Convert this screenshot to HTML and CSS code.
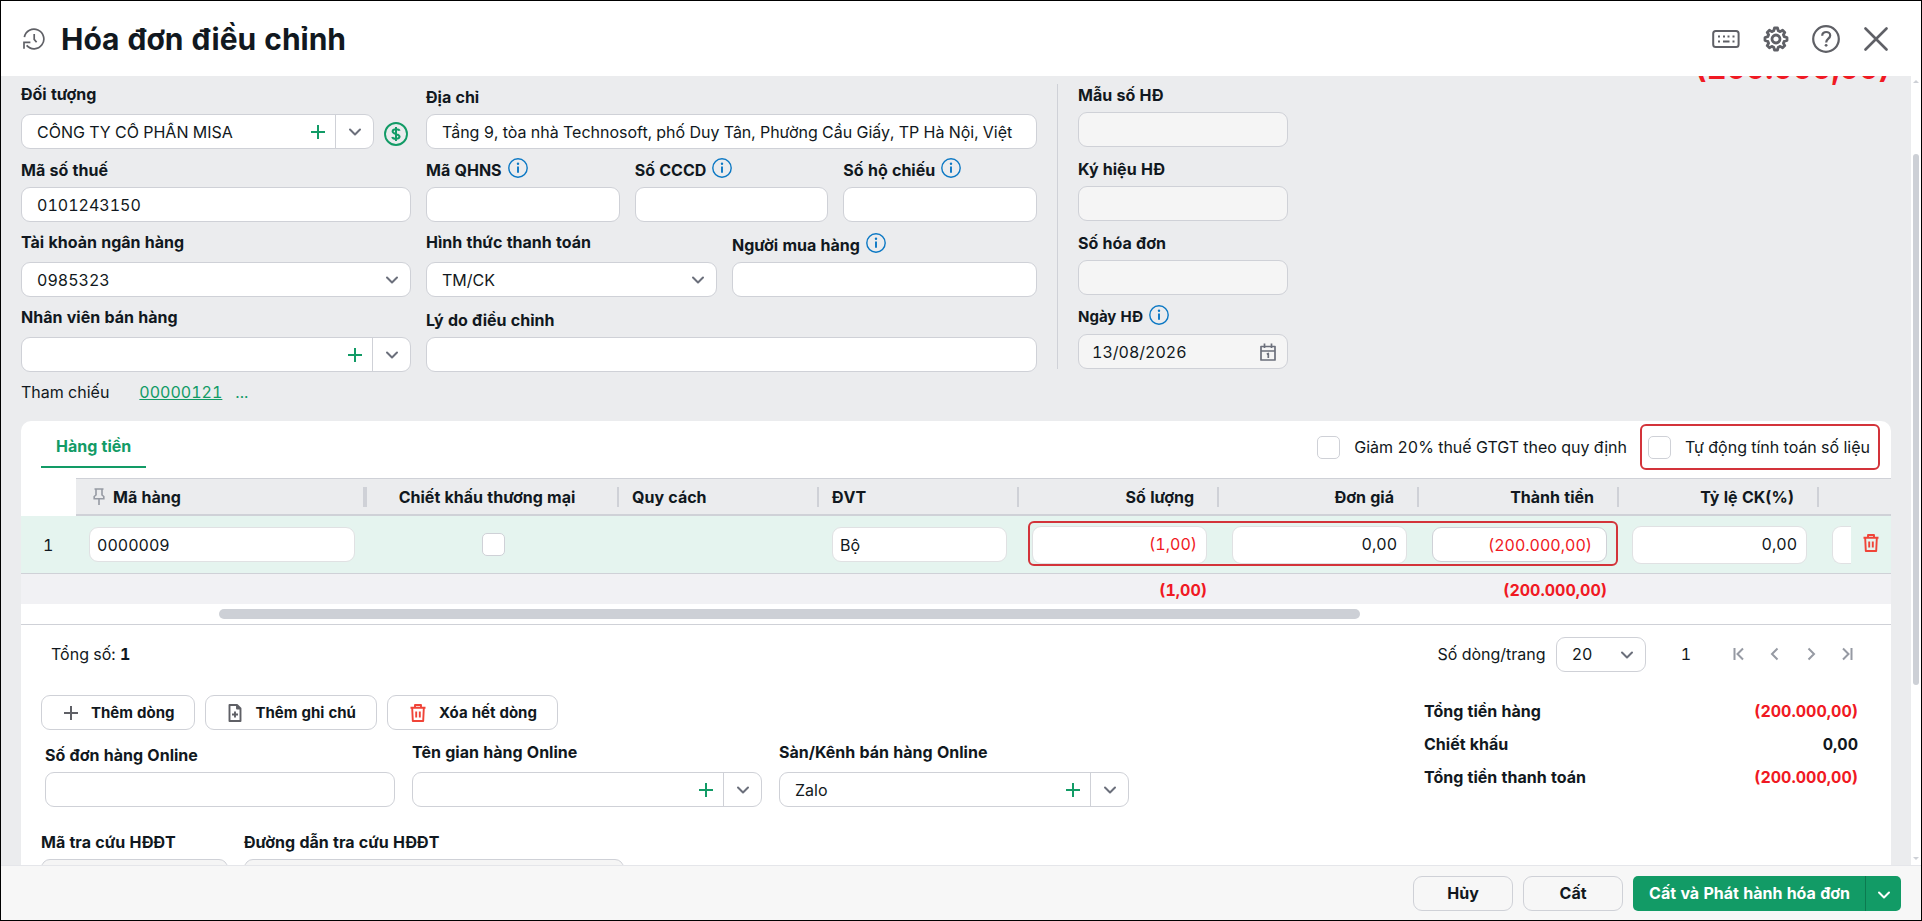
FILE: index.html
```html
<!DOCTYPE html>
<html lang="vi">
    <head>
        <meta charset="utf-8">
        <title>Hóa đơn điều chỉnh</title>
        <link rel="stylesheet" href="styles.css">
    </head>
    <body>
        <!-- icon dùng chung -->
        <svg class="hide">
            <symbol id="i-down" viewBox="0 0 14 14"><path d="M2 4.5l5 5 5-5" fill="none" stroke="currentColor" stroke-width="2" stroke-linecap="round" stroke-linejoin="round"/></symbol>
            <symbol id="i-plus" viewBox="0 0 14 14"><path d="M7 0v14M0 7h14" fill="none" stroke="currentColor" stroke-width="2"/></symbol>
            <symbol id="i-info" viewBox="0 0 20 20"><circle cx="10" cy="10" r="9.2" fill="none" stroke="currentColor" stroke-width="1.4"/><path d="M10 8.5v6.3" stroke="currentColor" stroke-width="1.9"/><circle cx="10" cy="5.8" r="1.2" fill="currentColor"/></symbol>
            <symbol id="i-trash" viewBox="0 0 16 18"><path d="M0.5 3.8h15M5 3.5V1h6v2.5M2.2 4.2l.6 12.8h10.4l.6-12.8M6.2 7.5v6M9.8 7.5v6" fill="none" stroke="currentColor" stroke-width="1.9" stroke-linejoin="round"/></symbol>
        </svg>

        <div class="page">
            <!-- tiêu đề -->
            <header class="header">
                <svg class="icon-history" viewBox="0 0 22 22"><path d="M1.4 9.2A9.8 9.8 0 1 1 3.6 17.4M1 20.8V14.4H7.4M11.2 6v5.4l2.4 2.8" fill="none" stroke="currentColor" stroke-width="1.7"/></svg>
                <h1 class="title">Hóa đơn điều chỉnh</h1>
                <div class="header-tools">
                    <button class="tool" aria-label="Phím tắt">
                        <svg width="28" height="28" viewBox="0 0 28 28"><rect x="1.2" y="6" width="25.4" height="16" rx="2.5" fill="none" stroke="currentColor" stroke-width="2"/><path d="M6 11.5h2M11 11.5h2M15.5 11.5h2M20.5 11.5h2M6 16.5h2M11 16.5h6.5M20.5 16.5h2" stroke="currentColor" stroke-width="2"/></svg>
                    </button>
                    <button class="tool" aria-label="Thiết lập">
                        <svg width="26" height="26" viewBox="-13 -13 26 26"><path d="M-2.3-8.2L-1.5-11H1.5L2.3-8.2L4.2-7.4L6.6-8.8L8.8-6.6L7.4-4.2L8.2-2.3L11-1.5V1.5L8.2 2.3L7.4 4.2L8.8 6.6L6.6 8.8L4.2 7.4L2.3 8.2L1.5 11H-1.5L-2.3 8.2L-4.2 7.4L-6.6 8.8L-8.8 6.6L-7.4 4.2L-8.2 2.3L-11 1.5V-1.5L-8.2-2.3L-7.4-4.2L-8.8-6.6L-6.6-8.8L-4.2-7.4Z" fill="none" stroke="currentColor" stroke-width="2.8" stroke-linejoin="round"/><circle r="4" fill="none" stroke="currentColor" stroke-width="2.8"/></svg>
                    </button>
                    <button class="tool" aria-label="Trợ giúp">
                        <svg width="28" height="28" viewBox="0 0 28 28"><circle cx="14" cy="14" r="12.8" fill="none" stroke="currentColor" stroke-width="2.2"/><path d="M10.2 10.8c0-5.2 8-4.8 8-.3 0 3.2-4 3.2-4 7" fill="none" stroke="currentColor" stroke-width="2.2"/><circle cx="14.1" cy="20.3" r="1.4" fill="currentColor"/></svg>
                    </button>
                    <button class="tool" aria-label="Đóng">
                        <svg width="24" height="24" viewBox="0 0 24 24"><path d="M1.5 1.5l21 21M22.5 1.5l-21 21" stroke="currentColor" stroke-width="2.6" stroke-linecap="round"/></svg>
                    </button>
                </div>
            </header>

            <div class="body">
                <main class="content">
                    <div class="big-total">(200.000,00)</div>

                    <!-- thông tin chung -->
                    <section class="form">
                        <div class="form-col">
                            <div class="field">
                                <label class="label label-combo" for="object">Đối tượng</label>
                                <div class="with-icon">
                                    <div class="combo">
                                        <input id="object" type="text" value="CÔNG TY CỔ PHẦN MISA">
                                        <button class="combo-add" aria-label="Thêm"><svg><use href="#i-plus"/></svg></button>
                                        <button class="combo-open" aria-label="Chọn"><svg><use href="#i-down"/></svg></button>
                                    </div>
                                    <button class="debt" aria-label="Công nợ">
                                        <svg width="24" height="24" viewBox="0 0 24 24"><circle cx="12" cy="12" r="11" fill="none" stroke="currentColor" stroke-width="1.9"/><path d="M15.6 8.8C15 7 9 6.4 8.6 9.3c-.3 3.1 7.2 2.2 7 5.4-.3 3-6.8 2.6-7.4.3M12 5v14" fill="none" stroke="currentColor" stroke-width="2"/></svg>
                                    </button>
                                </div>
                            </div>
                            <div class="field">
                                <label class="label" for="tax">Mã số thuế</label>
                                <input id="tax" class="box" type="text" value="0101243150">
                            </div>
                            <div class="field">
                                <label class="label label-combo" for="bank">Tài khoản ngân hàng</label>
                                <div class="select"><select id="bank" class="box"><option>0985323</option></select><svg><use href="#i-down"/></svg></div>
                            </div>
                            <div class="field">
                                <label class="label label-combo" for="staff">Nhân viên bán hàng</label>
                                <div class="combo">
                                    <input id="staff" type="text">
                                    <button class="combo-add" aria-label="Thêm"><svg><use href="#i-plus"/></svg></button>
                                    <button class="combo-open" aria-label="Chọn"><svg><use href="#i-down"/></svg></button>
                                </div>
                            </div>
                        </div>

                        <div class="form-col">
                            <div class="field">
                                <label class="label" for="address">Địa chỉ</label>
                                <input id="address" class="box" type="text" value="Tầng 9, tòa nhà Technosoft, phố Duy Tân, Phường Cầu Giấy, TP Hà Nội, Việt">
                            </div>
                            <div class="field-row">
                                <div class="field">
                                    <label class="label" for="qhns">Mã QHNS <svg class="info"><use href="#i-info"/></svg></label>
                                    <input id="qhns" class="box" type="text">
                                </div>
                                <div class="field">
                                    <label class="label" for="cccd">Số CCCD <svg class="info"><use href="#i-info"/></svg></label>
                                    <input id="cccd" class="box" type="text">
                                </div>
                                <div class="field">
                                    <label class="label" for="passport">Số hộ chiếu <svg class="info"><use href="#i-info"/></svg></label>
                                    <input id="passport" class="box" type="text">
                                </div>
                            </div>
                            <div class="field-row field-row-pay">
                                <div class="field">
                                    <label class="label label-combo" for="pay">Hình thức thanh toán</label>
                                    <div class="select"><select id="pay" class="box"><option>TM/CK</option></select><svg><use href="#i-down"/></svg></div>
                                </div>
                                <div class="field">
                                    <label class="label" for="buyer">Người mua hàng <svg class="info"><use href="#i-info"/></svg></label>
                                    <input id="buyer" class="box" type="text">
                                </div>
                            </div>
                            <div class="field">
                                <label class="label" for="reason">Lý do điều chỉnh</label>
                                <input id="reason" class="box" type="text">
                            </div>
                        </div>

                        <div class="form-col form-col-invoice">
                            <div class="field">
                                <label class="label" for="form-no">Mẫu số HĐ</label>
                                <input id="form-no" class="box box-off" type="text" readonly>
                            </div>
                            <div class="field">
                                <label class="label" for="serial">Ký hiệu HĐ</label>
                                <input id="serial" class="box box-off" type="text" readonly>
                            </div>
                            <div class="field">
                                <label class="label" for="inv-no">Số hóa đơn</label>
                                <input id="inv-no" class="box box-off" type="text" readonly>
                            </div>
                            <div class="field">
                                <label class="label label-small" for="inv-date">Ngày HĐ <svg class="info"><use href="#i-info"/></svg></label>
                                <div class="date">
                                    <input id="inv-date" type="text" value="13/08/2026" readonly>
                                    <svg width="16" height="18" viewBox="0 0 16 18"><path d="M1 3.5h14v13.5H1zM1 8h14M4.5 .5v4.500M11.5 .5v4.500M6.8 11.2l1.5-.7v4.500" fill="none" stroke="currentColor" stroke-width="1.7" stroke-linejoin="round"/></svg>
                                </div>
                            </div>
                        </div>
                    </section>

                    <div class="refs">
                        <span>Tham chiếu</span>
                        <a href="#" class="ref-link">00000121</a>
                        <a href="#" class="ref-more">...</a>
                    </div>

                    <section class="card">
                        <div class="tabs">
                            <button class="tab">Hàng tiền</button>
                            <div class="options">
                                <label class="option"><input class="check" type="checkbox">Giảm 20% thuế GTGT theo quy định</label>
                                <label class="option option-marked"><input class="check" type="checkbox">Tự động tính toán số liệu</label>
                            </div>
                        </div>

                        <!-- bảng hàng hóa -->
                        <table class="grid">
                            <colgroup>
                                <col class="c-no"><col class="c-code"><col class="c-discount">
                                <col class="c-base"><col class="c-base"><col class="c-base"><col class="c-base"><col class="c-base"><col class="c-base">
                                <col class="c-next"><col class="c-act">
                            </colgroup>
                            <thead>
                                <tr>
                                    <th class="blank"></th>
                                    <th class="pinned"><svg class="pin" viewBox="0 0 12 17"><path d="M1.5 1h9M3 1v6L1.2 8.5v2.3h9.6V8.5L9 7V1M6 11v6" fill="none" stroke="currentColor" stroke-width="1.6"/></svg>Mã hàng</th>
                                    <th class="mid">Chiết khấu thương mại</th>
                                    <th>Quy cách</th>
                                    <th>ĐVT</th>
                                    <th class="num">Số lượng</th>
                                    <th class="num">Đơn giá</th>
                                    <th class="num">Thành tiền</th>
                                    <th class="num">Tỷ lệ CK(%)</th>
                                    <th class="last"></th>
                                    <th class="last"></th>
                                </tr>
                            </thead>
                            <tbody>
                                <tr>
                                    <td class="no">1</td>
                                    <td><input class="cell" type="text" value="0000009" aria-label="Mã hàng"></td>
                                    <td class="mid"><input class="check" type="checkbox" aria-label="Chiết khấu thương mại"></td>
                                    <td></td>
                                    <td><input class="cell" type="text" value="Bộ" aria-label="ĐVT"></td>
                                    <td class="marked"><input class="cell cell-num red" type="text" value="(1,00)" aria-label="Số lượng"></td>
                                    <td><input class="cell cell-num" type="text" value="0,00" aria-label="Đơn giá"></td>
                                    <td><input class="cell cell-amount red" type="text" value="(200.000,00)" aria-label="Thành tiền"></td>
                                    <td><input class="cell cell-num" type="text" value="0,00" aria-label="Tỷ lệ CK"></td>
                                    <td class="cut"><div class="cell-cut"></div></td>
                                    <td class="act"><button class="del" aria-label="Xóa dòng"><svg><use href="#i-trash"/></svg></button></td>
                                </tr>
                            </tbody>
                            <tfoot>
                                <tr>
                                    <td colspan="5"></td>
                                    <td>(1,00)</td>
                                    <td></td>
                                    <td>(200.000,00)</td>
                                    <td colspan="3"></td>
                                </tr>
                            </tfoot>
                        </table>
                        <div class="hscroll"><div class="hthumb"></div></div>

                        <div class="pager">
                            <span>Tổng số: <b>1</b></span>
                            <label class="pager-label" for="size">Số dòng/trang</label>
                            <div class="select select-size"><select id="size" class="box"><option>20</option></select><svg><use href="#i-down"/></svg></div>
                            <span class="page-no">1</span>
                            <div class="pager-nav">
                                <button aria-label="Trang đầu"><svg viewBox="0 0 12 14"><path d="M1.5 1v12M10 1.5L4.5 7l5.5 5.5"/></svg></button>
                                <button aria-label="Trang trước"><svg viewBox="0 0 12 14"><path d="M8.5 1.5L3 7l5.5 5.5"/></svg></button>
                                <button aria-label="Trang sau"><svg viewBox="0 0 12 14"><path d="M3.5 1.5L9 7l-5.5 5.5"/></svg></button>
                                <button aria-label="Trang cuối"><svg viewBox="0 0 12 14"><path d="M10.5 1v12M2 1.5L7.5 7L2 12.5"/></svg></button>
                            </div>
                        </div>

                        <div class="bottom">
                            <div class="bottom-left">
                                <div class="actions">
                                    <button class="btn"><svg width="14" height="14"><use href="#i-plus"/></svg>Thêm dòng</button>
                                    <button class="btn"><svg width="14" height="18" viewBox="0 0 14 18"><path d="M9 1H1.5v16h11V4.5zM9 1v3.5h3.5M7 7.5v6M4 10.5h6" fill="none" stroke="currentColor" stroke-width="1.9" stroke-linejoin="round"/></svg>Thêm ghi chú</button>
                                    <button class="btn"><svg class="red-icon" width="16" height="18"><use href="#i-trash"/></svg>Xóa hết dòng</button>
                                </div>
                                <div class="online">
                                    <div class="field">
                                        <label class="label" for="on-no">Số đơn hàng Online</label>
                                        <input id="on-no" class="box" type="text">
                                    </div>
                                    <div class="field">
                                        <label class="label label-combo" for="on-shop">Tên gian hàng Online</label>
                                        <div class="combo">
                                            <input id="on-shop" type="text">
                                            <button class="combo-add" aria-label="Thêm"><svg><use href="#i-plus"/></svg></button>
                                            <button class="combo-open" aria-label="Chọn"><svg><use href="#i-down"/></svg></button>
                                        </div>
                                    </div>
                                    <div class="field">
                                        <label class="label label-combo" for="on-channel">Sàn/Kênh bán hàng Online</label>
                                        <div class="combo">
                                            <input id="on-channel" type="text" value="Zalo">
                                            <button class="combo-add" aria-label="Thêm"><svg><use href="#i-plus"/></svg></button>
                                            <button class="combo-open" aria-label="Chọn"><svg><use href="#i-down"/></svg></button>
                                        </div>
                                    </div>
                                </div>
                                <div class="lookup">
                                    <div class="field">
                                        <label class="label" for="lk-code">Mã tra cứu HĐĐT</label>
                                        <input id="lk-code" class="box box-off" type="text" readonly>
                                    </div>
                                    <div class="field">
                                        <label class="label" for="lk-link">Đường dẫn tra cứu HĐĐT</label>
                                        <input id="lk-link" class="box box-off" type="text" readonly>
                                    </div>
                                </div>
                            </div>
                            <dl class="totals">
                                <dt>Tổng tiền hàng</dt><dd class="red">(200.000,00)</dd>
                                <dt>Chiết khấu</dt><dd>0,00</dd>
                                <dt>Tổng tiền thanh toán</dt><dd class="red">(200.000,00)</dd>
                            </dl>
                        </div>
                    </section>
                </main>
                <div class="vscroll">
                    <div class="arrow arrow-up"></div>
                    <div class="vtrack"><div class="vthumb"></div></div>
                    <div class="arrow arrow-down"></div>
                </div>
            </div>

            <footer class="footer">
                <button class="btn-foot">Hủy</button>
                <button class="btn-foot">Cất</button>
                <div class="split">
                    <button class="split-main">Cất và Phát hành hóa đơn</button>
                    <button class="split-more" aria-label="Thêm lựa chọn"><svg><use href="#i-down"/></svg></button>
                </div>
            </footer>
        </div>
    </body>
</html>
```

FILE: styles.css
```css
*,
*::before,
*::after {
    box-sizing: border-box;
}
body {
    margin: 0;
    font-family: Inter, "Liberation Sans", sans-serif;
    font-size: 16px;
    line-height: 20px;
    font-variant-numeric: tabular-nums;
    color: #111820;
}
button, input, select {
    font: inherit;
    font-variant-numeric: tabular-nums;
    color: inherit;
    margin: 0;
}
button {
    padding: 0;
    border: none;
    background: none;
    cursor: pointer;
}
.hide {
    display: none;
}
.page {
    display: flex;
    flex-direction: column;
    height: 100vh;
    border: 1px solid #000;
    background: #ebecee;
}

/* header */
.header {
    display: flex;
    align-items: center;
    flex: none;
    height: 75px;
    padding: 0 31px 0 22px;
    background: #fff;
}
.icon-history {
    width: 22px;
    height: 22px;
    color: #5f6066;
}
.title {
    margin: 0 0 0 16px;
    font-size: 30px;
    line-height: 36px;
    font-weight: 700;
}
.header-tools {
    display: flex;
    align-items: center;
    gap: 22px;
    margin-left: auto;
    color: #5f6066;
}
.tool {
    display: flex;
    justify-content: center;
    width: 28px;
}
.tool svg {
    flex: none;
}

/* body */
.body {
    display: flex;
    flex: 1;
    min-height: 0;
}
.content {
    flex: 1;
    min-width: 0;
    position: relative;
    overflow: hidden;
    padding: 0 20px;
}
.big-total {
    position: absolute;
    top: -26px;
    right: 21px;
    font-size: 30px;
    line-height: 36px;
    font-weight: 700;
    color: #f01923;
}
.form {
    display: grid;
    grid-template-columns: 390fr 611fr 236fr 588fr;
    column-gap: 15px;
}
.form-col {
    display: grid;
    grid-template-rows: 73px 73px 75px 75px;
    align-items: end;
    min-width: 0;
}
.form-col-invoice {
    grid-template-rows: 63px 74px 74px 74px;
    align-content: start;
    align-self: start;
    margin: 8px 0 0 5px;
    padding-left: 20px;
    border-left: 1px solid #cfd1d7;
}
.field {
    display: flex;
    flex-direction: column;
    min-width: 0;
}
.field-row {
    display: grid;
    grid-template-columns: 1fr 1fr 1fr;
    align-items: end;
    gap: 15px;
}
.field-row-pay {
    grid-template-columns: 291fr 305fr;
}
.label {
    display: flex;
    align-items: center;
    gap: 6px;
    height: 20px;
    margin-bottom: 7px;
    font-weight: 700;
    white-space: nowrap;
}
.label-combo {
    margin-bottom: 10px;
}
.label-small {
    font-size: 15px;
}
.info {
    width: 20px;
    height: 20px;
    margin-bottom: 4px;
    color: #0b78c4;
}
.box {
    width: 100%;
    height: 35px;
    padding: 0 15px;
    border: 1px solid #cfd1d7;
    border-radius: 9px;
    background: #fff;
    outline: none;
    appearance: none;
}
.box-off {
    background: #f5f5f5;
}
.combo {
    display: flex;
    flex: 1;
    height: 35px;
    min-height: 35px;
    border: 1px solid #cfd1d7;
    border-radius: 9px;
    background: #fff;
    min-width: 0;
}
.combo input {
    flex: 1;
    min-width: 0;
    padding: 0 0 0 15px;
    border: none;
    background: none;
    outline: none;
}
.combo-add {
    display: flex;
    align-items: center;
    justify-content: center;
    width: 34px;
    color: #129b66;
}
.combo-add svg {
    width: 14px;
    height: 14px;
}
.combo-open {
    display: flex;
    align-items: center;
    justify-content: center;
    width: 38px;
    border-left: 1px solid #cfd1d7;
    color: #6b6f7b;
}
.combo-open svg,
.select svg {
    width: 14px;
    height: 14px;
}
.with-icon {
    display: flex;
    align-items: center;
    gap: 10px;
}
.debt {
    display: flex;
    width: 27px;
    padding-top: 4px;
    color: #129b66;
}
.select {
    position: relative;
    color: #111820;
}
.select svg {
    position: absolute;
    right: 12px;
    top: 11px;
    color: #6b6f7b;
    pointer-events: none;
}
.date {
    display: flex;
    align-items: center;
    height: 35px;
    padding: 0 11px 0 13px;
    border: 1px solid #cfd1d7;
    border-radius: 9px;
    background: #f5f5f5;
    color: #6b6f7b;
}
.date input {
    flex: 1;
    min-width: 0;
    padding: 0;
    border: none;
    background: none;
    outline: none;
    color: #111820;
}
.date svg {
    flex: none;
}
.refs {
    display: flex;
    align-items: center;
    height: 40px;
}
.ref-link {
    margin-left: 30px;
    color: #129b66;
}
.ref-more {
    margin-left: 13px;
    color: #129b66;
    text-decoration: none;
}

/* card */
.card {
    margin-top: 9px;
    background: #fff;
    border-radius: 10px 10px 0 0;
}
.tabs {
    display: flex;
    height: 57px;
    padding-left: 20px;
}
.tab {
    height: 47px;
    padding: 4px 15px 0;
    border-bottom: 2px solid #129b66;
    color: #129b66;
    font-weight: 700;
}
.options {
    display: flex;
    align-items: flex-start;
    gap: 13px;
    margin: 3px 11px 0 auto;
}
.option {
    display: flex;
    align-items: center;
    gap: 14px;
    height: 46px;
}
.option-marked {
    padding: 0 8px 0 6px;
    border: 2px solid #d3333a;
    border-radius: 6px;
}
.check {
    width: 23px;
    height: 23px;
    border: 1px solid #cfd1d7;
    border-radius: 5px;
    background: #fff;
    appearance: none;
    vertical-align: middle;
}

/* table */
.grid {
    width: 100%;
    table-layout: fixed;
    border-collapse: separate;
    border-spacing: 0;
}
.c-no {
    width: 55px;
}
.c-discount {
    width: 252px;
}
.c-base {
    width: 200px;
}
.c-next {
    width: 32px;
}
.c-act {
    width: 40px;
}
.grid th {
    height: 38px;
    padding: 0 25px 0 13px;
    border-top: 1px solid #cfd1d7;
    border-bottom: 2px solid #cfd1d7;
    background: #ebecee linear-gradient(#cfd1d7, #cfd1d7) right center / 2px 20px no-repeat;
    font-weight: 700;
    text-align: left;
    white-space: nowrap;
}
.grid th.blank {
    border: none;
    background: #fff;
}
.grid th.pinned {
    padding-left: 17px;
    background-size: 4px 20px;
}
.grid th.last {
    background: #ebecee;
}
.grid th.mid,
.grid td.mid {
    text-align: center;
}
.grid th.num {
    text-align: right;
}
.pin {
    width: 12px;
    height: 17px;
    margin-right: 8px;
    color: #969aa3;
    vertical-align: -2px;
}
.grid tbody td {
    height: 58px;
    padding: 0 12px 0 13px;
    border-bottom: 1px solid #cfd1d7;
    background: #e5f4ef;
}
.grid tbody td.no {
    padding: 0 0 0 22px;
}
.grid tbody td.cut {
    padding-right: 0;
}
.grid tbody td.act {
    padding: 0;
    text-align: center;
}
.cell {
    display: block;
    width: 100%;
    height: 35px;
    padding: 0 7px;
    border: 1px solid #e0e1e3;
    border-radius: 9px;
    background: #fff;
    outline: none;
}
.cell-num {
    height: 38px;
    padding: 0 9px 2px;
    text-align: right;
}
.cell-amount {
    padding: 0 14px;
    border-color: #cfd1d7;
    text-align: right;
}
.cell-cut {
    height: 38px;
    border: 1px solid #e0e1e3;
    border-right: none;
    border-radius: 9px 0 0 9px;
    background: #fff;
}
.marked {
    position: relative;
}
/* khung đỏ bao ba ô số liệu */
.marked::after {
    content: "";
    position: absolute;
    top: 5px;
    left: 9px;
    width: calc(300% - 10px);
    height: 45px;
    border: 2px solid #d3333a;
    border-radius: 6px;
    pointer-events: none;
}
.red,
.grid tfoot td {
    color: #f01923;
}
.del svg {
    display: block;
    width: 16px;
    height: 18px;
    color: #f04438;
}
.grid tfoot td {
    height: 30px;
    padding: 2px 12px 0;
    background: #f1f1f4;
    font-weight: 700;
    text-align: right;
}
.hscroll {
    height: 21px;
    padding-top: 5px;
    border-bottom: 1px solid #cfd1d7;
}
.hthumb {
    width: 61%;
    height: 10px;
    margin-left: 10.6%;
    border-radius: 5px;
    background: #cdd0d6;
}

/* pager */
.pager {
    display: flex;
    align-items: center;
    height: 58px;
    padding: 0 32px 0 30px;
}
.pager-label {
    margin-left: auto;
}
.select-size {
    width: 90px;
    margin: 0 35px 0 10px;
}
.pager-nav {
    display: flex;
    gap: 12px;
    margin-left: 36px;
}
.pager-nav button {
    display: flex;
    justify-content: center;
    width: 24px;
}
.pager-nav svg {
    width: 12px;
    height: 14px;
    fill: none;
    stroke: #969aa3;
    stroke-width: 2;
}

/* bottom */
.bottom {
    display: flex;
    justify-content: space-between;
    padding: 12px 33px 40px 20px;
}
.actions {
    display: flex;
    gap: 10px;
}
.btn {
    display: flex;
    align-items: center;
    gap: 13px;
    height: 35px;
    padding: 0 20px 0 22px;
    border: 1px solid #cfd1d7;
    border-radius: 9px;
    font-size: 15px;
    font-weight: 700;
}
.btn svg {
    color: #5f6066;
}
.btn .red-icon {
    color: #f04438;
}
.online {
    display: grid;
    grid-template-columns: 350px 350px 350px;
    align-items: end;
    gap: 17px;
    height: 77px;
    margin-left: 4px;
}
.lookup {
    display: grid;
    grid-template-columns: 187px 380px;
    align-items: end;
    gap: 16px;
    height: 87px;
}
.totals {
    display: grid;
    grid-template-columns: auto auto;
    align-content: start;
    width: 434px;
    margin: 0;
    font-weight: 700;
    line-height: 33px;
}
.totals dd {
    margin: 0;
    text-align: right;
}

/* scrollbar */
.vscroll {
    display: flex;
    flex-direction: column;
    flex: none;
    width: 10px;
    background: #fff;
}
.vtrack {
    flex: 1;
    padding-top: 66px;
}
.vthumb {
    width: 6px;
    height: 76%;
    margin: 0 auto;
    border-radius: 3px;
    background: #cdd0d6;
}
.arrow {
    height: 12px;
    padding-top: 4px;
}
.arrow::before {
    content: "";
    display: block;
    width: 6px;
    margin: 0 auto;
    border: 3px solid transparent;
}
.arrow-up::before {
    border-top: none;
    border-bottom-color: #cdd0d6;
}
.arrow-down::before {
    border-bottom: none;
    border-top-color: #cdd0d6;
}

/* footer */
.footer {
    display: flex;
    align-items: center;
    justify-content: flex-end;
    flex: none;
    gap: 10px;
    height: 55px;
    padding: 0 20px;
    border-top: 1px solid #e5e6ea;
    background: #f7f7f7;
}
.btn-foot {
    width: 100px;
    height: 35px;
    border: 1px solid #cfd1d7;
    border-radius: 9px;
    font-weight: 700;
}
.split {
    display: flex;
    height: 35px;
    border-radius: 5px;
    background: #129b66;
    color: #fff;
    font-weight: 700;
}
.split-main {
    padding: 0 15px 0 16px;
}
.split-more {
    width: 36px;
    border-left: 1px solid #0c7a50;
}
.split-more svg {
    width: 14px;
    height: 14px;
    vertical-align: middle;
}
```
